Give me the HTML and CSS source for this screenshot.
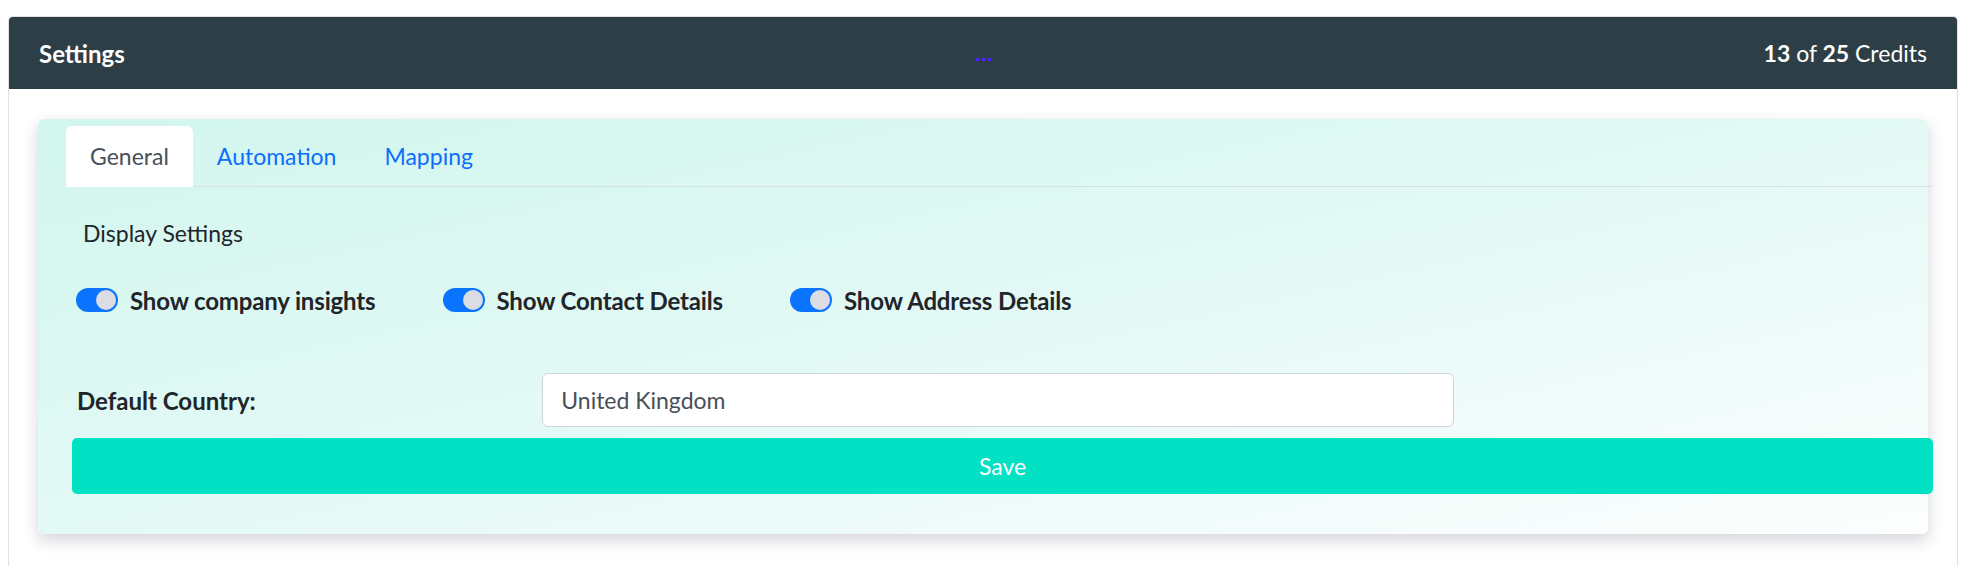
FILE: index.html
```html
<!DOCTYPE html>
<html lang="en">
<head>
  <meta charset="UTF-8" />
  <meta name="viewport" content="width=device-width, initial-scale=1" />
  <title>Settings</title>
  <link rel="stylesheet" href="styles.css">
</head>
<body>
  <div class="card">
    <header class="card-header">
      <h1 class="card-title">Settings</h1>
      <a href="#" class="more-link" aria-label="More"><i></i><i></i><i></i></a>
      <div class="credits"><b>13</b> of <b>25</b> Credits</div>
    </header>

    <div class="card-body">
      <section class="panel">
        <div class="panel-inner">
          <nav class="tabs">
            <a href="#" class="tab active">General</a>
            <a href="#" class="tab">Automation</a>
            <a href="#" class="tab">Mapping</a>
          </nav>

          <form class="tab-content">
            <h2 class="section-title">Display Settings</h2>

            <div class="switches">
              <label class="switch">
                <span class="switch-track"><span class="switch-knob"></span></span>
                Show company insights
              </label>
              <label class="switch">
                <span class="switch-track"><span class="switch-knob"></span></span>
                Show Contact Details
              </label>
              <label class="switch">
                <span class="switch-track"><span class="switch-knob"></span></span>
                Show Address Details
              </label>
            </div>

            <div class="country-row">
              <label for="country">Default Country:</label>
              <input type="text" id="country" value="United Kingdom" />
            </div>

            <button type="button" class="save-btn">Save</button>
          </form>
        </div>
      </section>
    </div>
  </div>
</body>
</html>
```

FILE: styles.css
```css
body {
  margin: 0;
  padding: 16px 20px 0 8px;
  background: #fff;
  font-family: Lato, "Noto Sans", sans-serif;
  font-size: 23px;
  color: #212529;
}
.card {
  border: 1px solid #e0e0e0;
  border-bottom: none;
  border-radius: 5px 5px 0 0;
  min-height: 560px;
  box-sizing: border-box;
}
.card-header {
  display: flex;
  align-items: center;
  height: 72px;
  padding: 0 30px;
  background-color: #2d3e46;
  color: #fff;
  border-radius: 4px 4px 0 0;
}
.card-title {
  flex: 1;
  margin: 0;
  font-size: 24px;
  font-weight: bold;
}
.more-link {
  display: flex;
  gap: 3px;
  margin-top: 12px;
}
.more-link i {
  width: 3px;
  height: 3px;
  background: #4a26ff;
}
.credits {
  flex: 1;
  text-align: right;
}
.card-body {
  padding: 30px 29px 0 29px;
}
.panel {
  padding: 7px 0 40px 28px;
  border-radius: 6px;
  background: linear-gradient(to bottom right, #d1f6ee 0%, #e3f9f5 50%, #fcfefe 100%);
  box-shadow: 0 6px 16px rgba(40, 40, 70, 0.2);
}
.panel-inner {
  margin-right: -5px;
}
.tabs {
  display: flex;
  border-bottom: 1px solid #dadfe3;
}
.tab {
  display: block;
  height: 61px;
  line-height: 61px;
  padding: 0 24px;
  margin-bottom: -1px;
  color: #0d6efd;
  text-decoration: none;
  border-radius: 6px 6px 0 0;
}
.tab.active {
  background: #fff;
  color: #495057;
}
.tab-content {
  padding-left: 6px;
}
.section-title {
  margin: 32px 0 0 11px;
  font-size: 23px;
  font-weight: normal;
  line-height: 29px;
}
.switches {
  display: flex;
  gap: 67px;
  margin: 37px 0 0 4px;
  height: 30px;
  align-items: center;
}
.switch {
  display: flex;
  align-items: center;
  gap: 12px;
  font-size: 24px;
  font-weight: bold;
  letter-spacing: -0.15px;
}
.switch-track {
  display: flex;
  align-items: center;
  justify-content: flex-end;
  width: 42px;
  height: 24px;
  padding: 0 2px;
  box-sizing: border-box;
  border-radius: 12px;
  background: #0a74ff;
}
.switch-knob {
  width: 20px;
  height: 20px;
  border-radius: 50%;
  background: #dcdde3;
}
.country-row {
  display: grid;
  grid-template-columns: calc(25% - 7px) 50%;
  align-items: center;
  margin-top: 58px;
}
.country-row label {
  padding-left: 5px;
  font-size: 24px;
  font-weight: bold;
}
.country-row input {
  height: 54px;
  margin: 0 7px 0 12px;
  padding: 0 18px;
  box-sizing: border-box;
  border: 1px solid #ced4da;
  border-radius: 6px;
  background: #fff;
  font-family: inherit;
  font-size: 23px;
  color: #495057;
}
.save-btn {
  display: block;
  width: 100%;
  height: 56px;
  margin-top: 11px;
  border: none;
  border-radius: 5px;
  background-color: #01e2c5;
  color: #fff;
  font-family: inherit;
  font-size: 23px;
  cursor: pointer;
}
```
